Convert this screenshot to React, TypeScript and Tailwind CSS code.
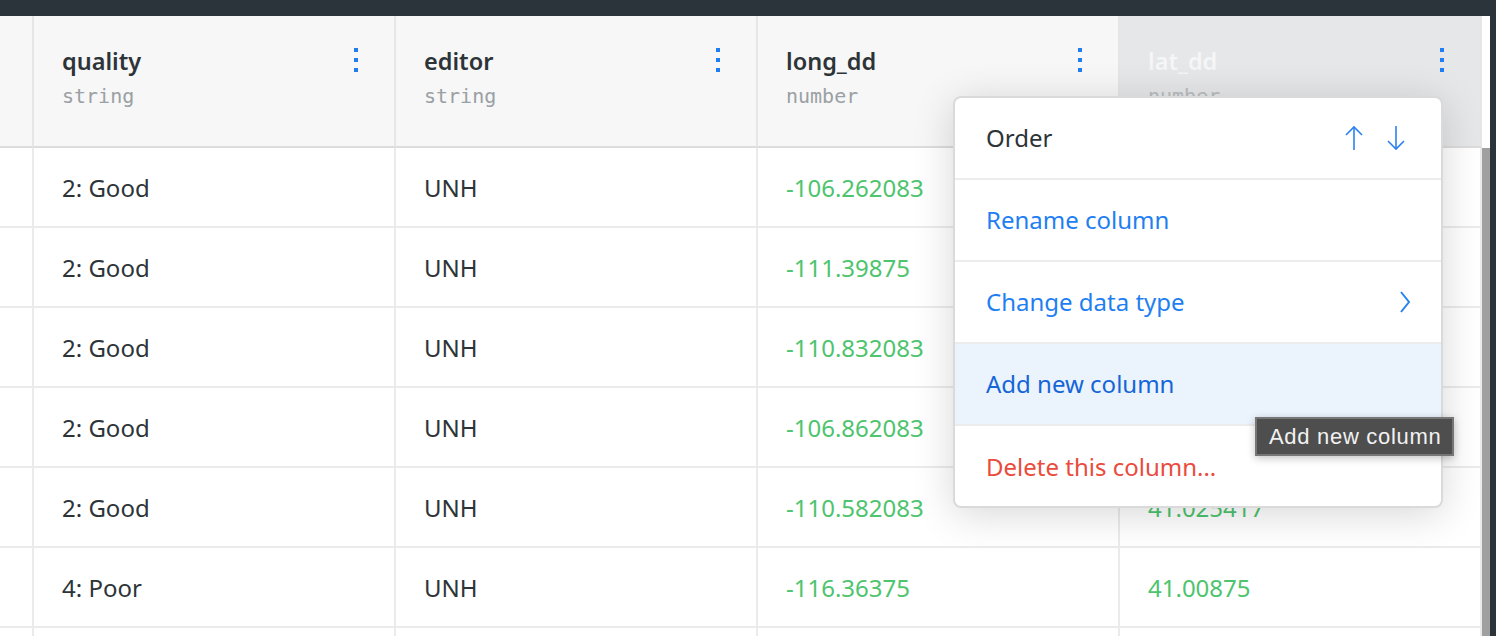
import React from "react";

const FONT = { fontFamily: '"Noto Sans", "Open Sans", sans-serif' };
const MONO = { fontFamily: '"DejaVu Sans Mono", "Liberation Mono", monospace' };

function Kebab() {
  return (
    <svg width="4" height="24" viewBox="0 0 4 24" className="shrink-0">
      <rect x="0" y="0" width="4" height="4" fill="#1f7ff2" />
      <rect x="0" y="10" width="4" height="4" fill="#1f7ff2" />
      <rect x="0" y="20" width="4" height="4" fill="#1f7ff2" />
    </svg>
  );
}

type Col = { name: string; type: string; selected?: boolean };
const cols: Col[] = [
  { name: "quality", type: "string" },
  { name: "editor", type: "string" },
  { name: "long_dd", type: "number" },
  { name: "lat_dd", type: "number", selected: true },
];

const rows = [
  ["2: Good", "UNH", "-106.262083", "41.862083"],
  ["2: Good", "UNH", "-111.39875", "41.39875"],
  ["2: Good", "UNH", "-110.832083", "41.832083"],
  ["2: Good", "UNH", "-106.862083", "41.062083"],
  ["2: Good", "UNH", "-110.582083", "41.025417"],
  ["4: Poor", "UNH", "-116.36375", "41.00875"],
  ["", "", "", ""],
];

function Header({ c }: { c: Col }) {
  return (
    <div
      className={`h-[132px] border-r-2 border-b-2 border-r-[#e6e6e6] border-b-[#dcdcdc] pl-[28px] pr-[36px] pt-[30px] flex justify-between items-start ${
        c.selected ? "bg-[#e6e7e9]" : "bg-[#f7f7f7]"
      }`}
    >
      <div className="flex flex-col">
        <span
          className={`text-[23.5px] leading-[30px] font-semibold ${
            c.selected ? "text-[#f5f6f7]" : "text-[#2d3438]"
          }`}
        >
          {c.name}
        </span>
        <span
          className={`text-[20px] leading-[24px] mt-[8px] ${
            c.selected ? "text-[#b9bcbf]" : "text-[#9aa0a4]"
          }`}
          style={MONO}
        >
          {c.type}
        </span>
      </div>
      <div className="pt-[2px]">
        <Kebab />
      </div>
    </div>
  );
}

function UpArrow() {
  return (
    <svg width="20" height="26" viewBox="0 0 20 26" fill="none" stroke="#2a82f0" strokeWidth="1.6">
      <path d="M10 2 V25" />
      <path d="M2 10 L10 2 L18 10" />
    </svg>
  );
}
function DownArrow() {
  return (
    <svg width="20" height="26" viewBox="0 0 20 26" fill="none" stroke="#2a82f0" strokeWidth="1.6">
      <path d="M10 1 V24" />
      <path d="M2 16 L10 24 L18 16" />
    </svg>
  );
}
function Chevron() {
  return (
    <svg width="12" height="22" viewBox="0 0 12 22" fill="none" stroke="#2a82f0" strokeWidth="2">
      <path d="M2 1 L10 11 L2 21" />
    </svg>
  );
}

function MenuItem({
  children,
  className = "",
  last = false,
}: {
  children: React.ReactNode;
  className?: string;
  last?: boolean;
}) {
  return (
    <div
      className={`h-[82px] ${last ? "h-[80px]" : "border-b-2 border-[#ececec]"} pl-[31px] pr-[36px] flex items-center justify-between text-[24px] ${className}`}
    >
      {children}
    </div>
  );
}

export default function App() {
  return (
    <div className="w-[1496px] h-[636px] bg-[#2b343b] pt-[16px] pr-[6px] overflow-hidden" style={FONT}>
      <div className="relative w-full h-full bg-white flex overflow-hidden">
        <div className="grid grid-cols-[34px_362px_362px_362px_362px] content-start">
          <div className="h-[132px] border-r-2 border-b-2 border-r-[#e6e6e6] border-b-[#dcdcdc] bg-[#f7f7f7]" />
          {cols.map((c) => (
            <Header key={c.name} c={c} />
          ))}
          {rows.map((r, i) => (
            <React.Fragment key={i}>
              <div className="h-[80px] border-r-2 border-b-2 border-[#ebebeb]" />
              {r.map((v, j) => (
                <div
                  key={j}
                  className={`h-[80px] border-r-2 border-b-2 border-[#ebebeb] pl-[28px] flex items-center text-[24px] leading-[30px] pt-[1px] ${
                    j >= 2 ? "text-[#4dc46d]" : "text-[#2d3438]"
                  }`}
                >
                  {v}
                </div>
              ))}
            </React.Fragment>
          ))}
        </div>
        <div className="w-[8px] flex flex-col">
          <div className="h-[132px] bg-white" />
          <div className="flex-1 bg-[#a0a0a0]" />
        </div>

        {/* Column menu */}
        <div className="absolute left-[953px] top-[80px] w-[490px] h-[412px] bg-white border-2 border-[#dadada] rounded-[8px] shadow-[0_6px_40px_rgba(0,0,0,0.16)] overflow-hidden">
          <MenuItem className="text-[#2d3438]">
            <span>Order</span>
            <div className="flex items-center gap-[22px] mr-[-1px]">
              <UpArrow />
              <DownArrow />
            </div>
          </MenuItem>
          <MenuItem className="text-[#1f7ff2]">
            <span>Rename column</span>
          </MenuItem>
          <MenuItem className="text-[#1f7ff2]">
            <span>Change data type</span>
            <div className="mr-[-6px]">
              <Chevron />
            </div>
          </MenuItem>
          <MenuItem className="text-[#1565d8] bg-[#ebf3fd] border-[#e2e8f0]">
            <span>Add new column</span>
          </MenuItem>
          <MenuItem className="text-[#e94b3c]" last>
            <span>Delete this column...</span>
          </MenuItem>
        </div>

        {/* Tooltip */}
        <div
          className="absolute left-[1255px] top-[401px] w-[199px] h-[39px] bg-[#4e4e4e] border-2 border-[#767676] flex items-center pl-[12px] text-[22px] tracking-[0.7px] text-[#f2f2f2] shadow-[0_2px_8px_rgba(0,0,0,0.25)]"
          style={{ fontFamily: '"Liberation Sans", Arial, sans-serif' }}
        >
          Add new column
        </div>
      </div>
    </div>
  );
}
